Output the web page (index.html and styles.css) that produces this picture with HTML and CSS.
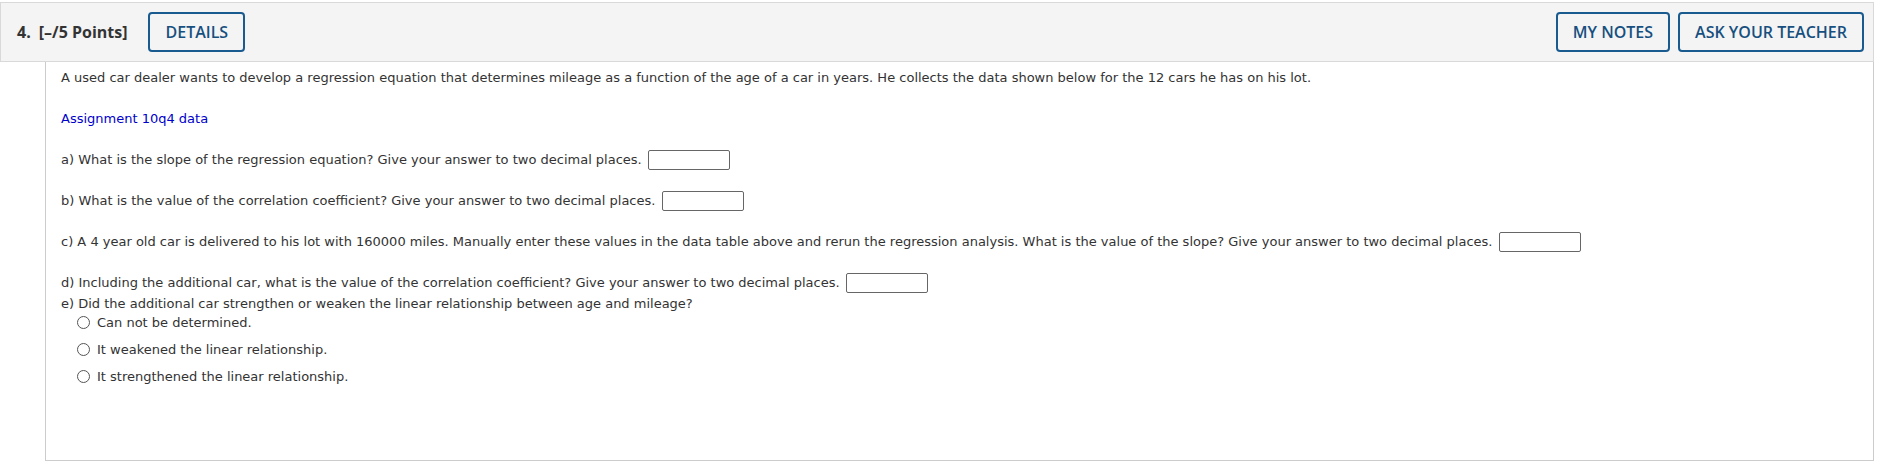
FILE: index.html
```html
<!DOCTYPE html>
<html>
<head>
<meta charset="utf-8">
<link rel="stylesheet" href="styles.css">
</head>
<body>
<div class="question">
  <div class="q-header">
    <div class="q-title"><span class="q-num">4.</span><span class="q-points">[–/5 Points]</span></div>
    <button class="btn">DETAILS</button>
    <div class="spacer"></div>
    <button class="btn">MY NOTES</button>
    <button class="btn">ASK YOUR TEACHER</button>
  </div>
  <div class="q-body">
    <div class="line">A used car dealer wants to develop a regression equation that determines mileage as a function of the age of a car in years. He collects the data shown below for the 12 cars he has on his lot.</div>
    <div class="line"><a class="link" href="#">Assignment 10q4 data</a></div>
    <div class="line">a) What is the slope of the regression equation? Give your answer to two decimal places. <span class="answer"></span></div>
    <div class="line">b) What is the value of the correlation coefficient? Give your answer to two decimal places. <span class="answer"></span></div>
    <div class="line">c) A 4 year old car is delivered to his lot with 160000 miles. Manually enter these values in the data table above and rerun the regression analysis. What is the value of the slope? Give your answer to two decimal places. <span class="answer"></span></div>
    <div class="line tight">d) Including the additional car, what is the value of the correlation coefficient? Give your answer to two decimal places. <span class="answer"></span></div>
    <div class="line tight">e) Did the additional car strengthen or weaken the linear relationship between age and mileage?</div>
    <div class="options">
      <div class="option"><span class="radio"></span>Can not be determined.</div>
      <div class="option"><span class="radio"></span>It weakened the linear relationship.</div>
      <div class="option"><span class="radio"></span>It strengthened the linear relationship.</div>
    </div>
  </div>
</div>
</body>
</html>
```

FILE: styles.css
```css
html, body {
  margin: 0;
  padding: 0;
  background: #ffffff;
}
.question {
  width: 1874px;
  padding-top: 2px;
}
.q-header {
  display: flex;
  align-items: center;
  height: 58px;
  background: #f4f4f4;
  border: 1px solid #d9d9d9;
  padding: 0 9px 0 16px;
  font-family: "Open Sans", "Liberation Sans", sans-serif;
}
.q-title {
  display: flex;
  align-items: center;
  font-size: 16px;
  font-weight: 700;
  color: #333333;
}
.q-num {
  margin-right: 8px;
}
.q-points {
  margin-right: 21px;
}
.spacer {
  flex: 1;
}
.btn {
  height: 40px;
  box-sizing: border-box;
  padding: 0 15px;
  border: 2px solid #1a5b8f;
  border-radius: 4px;
  background: transparent;
  color: #17507f;
  font-family: "Open Sans", "Liberation Sans", sans-serif;
  font-size: 16px;
  font-weight: 600;
  margin-left: 8px;
}
.q-header .btn:first-of-type {
  margin-left: 0;
}
.q-body {
  margin-left: 45px;
  height: 393px;
  border-left: 1px solid #cccccc;
  border-right: 1px solid #cccccc;
  border-bottom: 1px solid #cccccc;
  padding: 5px 15px 0 15px;
  font-family: "DejaVu Sans", Verdana, sans-serif;
  font-size: 13px;
  color: #333333;
}
.line {
  line-height: 21px;
  min-height: 21px;
  margin-bottom: 20px;
  display: flex;
  align-items: center;
  white-space: pre;
}
.line.tight {
  margin-bottom: 0;
}
.link {
  color: #0000cc;
  text-decoration: none;
}
.answer {
  display: inline-block;
  width: 80px;
  height: 18px;
  border: 1px solid #666666;
  border-radius: 2px;
  margin-left: 2px;
}
.options {
  padding-left: 16px;
  margin-top: -2px;
}
.option {
  display: flex;
  align-items: center;
  height: 20px;
  margin-top: 7px;
}
.option:first-child {
  margin-top: 0;
}
.radio {
  width: 11px;
  height: 11px;
  border: 1px solid #555555;
  border-radius: 50%;
  margin-right: 7px;
  flex: none;
}
```
